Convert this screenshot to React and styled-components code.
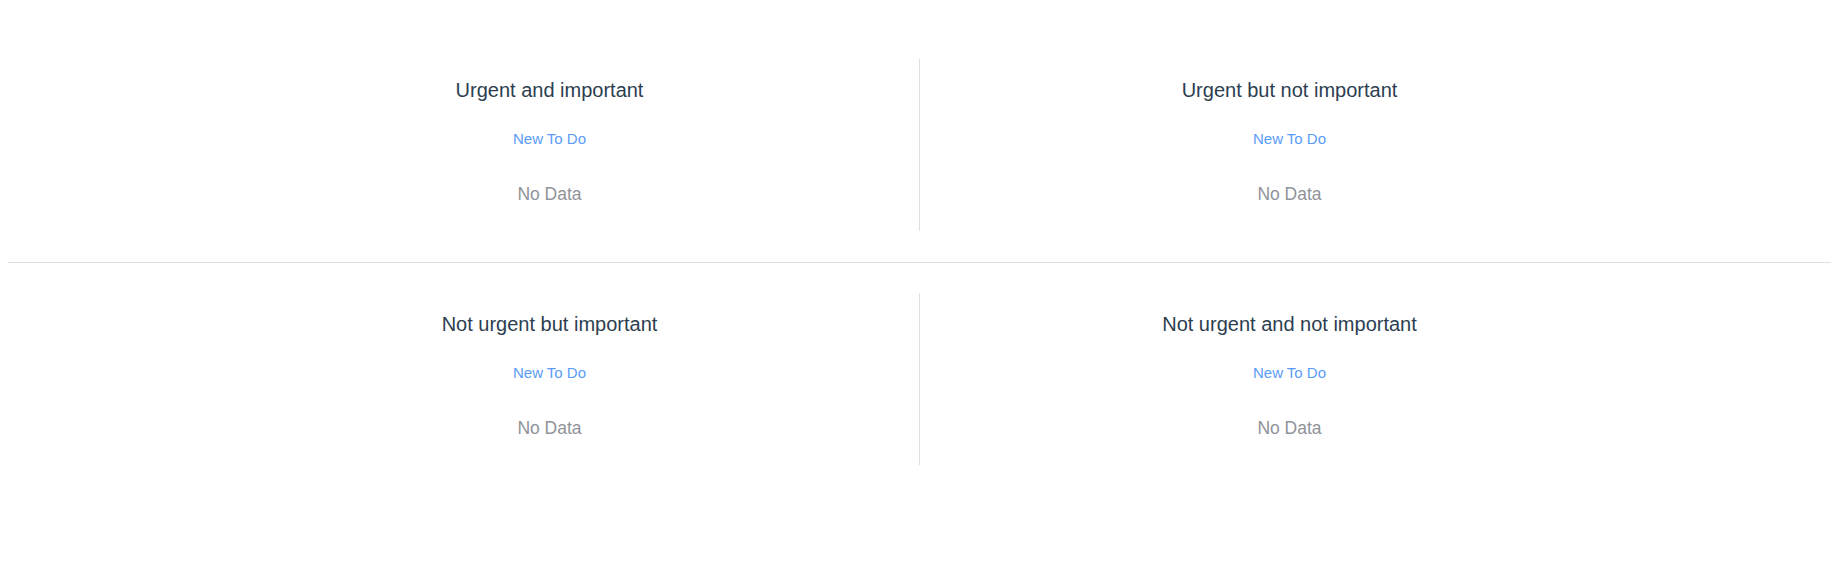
import React from 'react';
import styled, { createGlobalStyle } from 'styled-components';

const GlobalStyle = createGlobalStyle`
  body {
    margin: 8px;
    background: #ffffff;
    font-family: "Liberation Sans", Arial, Helvetica, sans-serif;
    -webkit-font-smoothing: antialiased;
    color: #2c3e50;
  }
`;

const Board = styled.div`
  padding-top: 51px;
  text-align: center;
`;

const Row = styled.div`
  display: flex;
  justify-content: center;
`;

const Quadrant = styled.div`
  width: 739px;
  box-sizing: border-box;
  padding: 19px 0 25px;
  display: flex;
  flex-direction: column;
  align-items: center;
`;

const VDivider = styled.div`
  width: 1px;
  background: #dcdfe6;
`;

const HDivider = styled.div`
  height: 1px;
  background: #dcdfe6;
  margin: 31px 0 30px;
`;

const Title = styled.h3`
  margin: 0;
  font-size: 20px;
  line-height: 24px;
  font-weight: 400;
  color: #2c3e50;
`;

const LinkButton = styled.button`
  margin-top: 27px;
  padding: 0;
  border: none;
  background: none;
  font-family: inherit;
  font-size: 15px;
  line-height: 20px;
  color: #5a9cf8;
  cursor: pointer;
`;

const Empty = styled.div`
  margin-top: 33px;
  font-size: 17.5px;
  line-height: 24px;
  color: #909399;
`;

const rows = [
  ['Urgent and important', 'Urgent but not important'],
  ['Not urgent but important', 'Not urgent and not important'],
];

function Cell({ title }) {
  return (
    <Quadrant>
      <Title>{title}</Title>
      <LinkButton>New To Do</LinkButton>
      <Empty>No Data</Empty>
    </Quadrant>
  );
}

export default function App() {
  return (
    <>
      <GlobalStyle />
      <Board>
        {rows.map((pair, i) => (
          <React.Fragment key={i}>
            {i > 0 && <HDivider />}
            <Row>
              <Cell title={pair[0]} />
              <VDivider />
              <Cell title={pair[1]} />
            </Row>
          </React.Fragment>
        ))}
      </Board>
    </>
  );
}
